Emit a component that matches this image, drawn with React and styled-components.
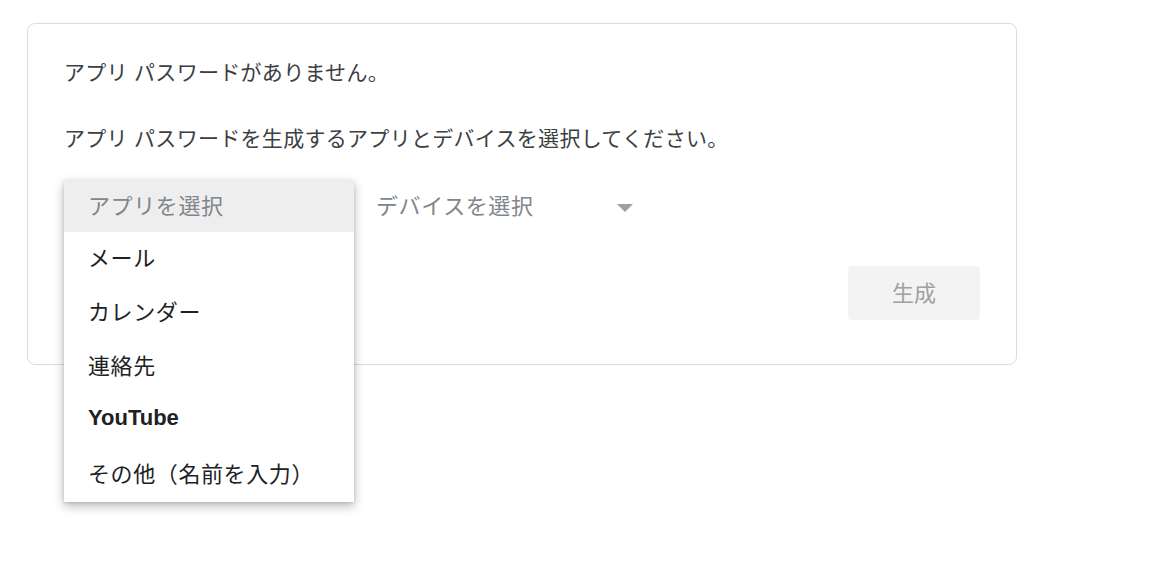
import styled, { createGlobalStyle } from 'styled-components';

const GlobalStyle = createGlobalStyle`
  html, body {
    margin: 0;
    background: #ffffff;
    font-family: "Liberation Sans", "Noto Sans CJK JP", sans-serif;
  }
`;

const Page = styled.div`
  box-sizing: border-box;
  min-height: 582px;
  padding: 23px 0 0 27px;
`;

const Card = styled.div`
  position: relative;
  box-sizing: border-box;
  width: 990px;
  height: 342px;
  padding: 35px 36px 0 36px;
  border: 1px solid #dadce0;
  border-radius: 8px;
`;

const Message = styled.p`
  margin: 0 0 ${(p) => p.$gap}px 0;
  font-size: 21px;
  line-height: 28px;
  letter-spacing: 0.3px;
  color: #3c4043;
`;

const SelectRow = styled.div`
  display: flex;
  align-items: center;
  height: 52px;
  margin-top: 27px;
`;

const Select = styled.div`
  display: flex;
  align-items: center;
  justify-content: space-between;
  box-sizing: border-box;
  width: ${(p) => p.$width}px;
  height: 52px;
  padding: 0 ${(p) => p.$padRight}px 5px ${(p) => p.$padLeft}px;
  font-size: 22px;
  letter-spacing: 0.6px;
  color: #80868b;
`;

const Caret = styled.span`
  width: 0;
  height: 0;
  border-left: 8px solid transparent;
  border-right: 8px solid transparent;
  border-top: 8px solid #9aa0a6;
  margin-top: 9px;
`;

const ButtonRow = styled.div`
  display: flex;
  justify-content: flex-end;
  margin-top: 34px;
`;

const GenerateButton = styled.button`
  width: 132px;
  height: 54px;
  padding: 0 0 5px 0;
  border: 0;
  border-radius: 4px;
  background: #f3f3f3;
  color: #a0a0a0;
  font-family: "Noto Sans CJK JP", sans-serif;
  font-size: 22px;
`;

const Menu = styled.ul`
  position: absolute;
  left: 36px;
  top: 156px;
  z-index: 2;
  width: 290px;
  margin: 0;
  padding: 0;
  list-style: none;
  background: #ffffff;
  box-shadow: 0 4px 10px rgba(0, 0, 0, 0.28), 0 1px 3px rgba(0, 0, 0, 0.12);
`;

const MenuItem = styled.li`
  display: flex;
  align-items: center;
  height: ${(p) => (p.$header ? 52 : 54)}px;
  padding-left: 24px;
  padding-bottom: ${(p) => (p.$header ? 5 : 6)}px;
  box-sizing: border-box;
  font-size: 22px;
  letter-spacing: ${(p) => (p.$bold ? 0 : 0.6)}px;
  font-weight: ${(p) => (p.$bold ? 700 : 400)};
  color: ${(p) => (p.$header ? '#80868b' : '#202124')};
  background: ${(p) => (p.$header ? '#eeeeee' : '#ffffff')};
`;

const apps = ['メール', 'カレンダー', '連絡先', 'YouTube', 'その他（名前を入力）'];

export default function App() {
  return (
    <Page>
      <GlobalStyle />
      <Card>
        <Message $gap={38}>アプリ パスワードがありません。</Message>
        <Message $gap={0}>アプリ パスワードを生成するアプリとデバイスを選択してください。</Message>
        <SelectRow>
          <Select $width={290} $padLeft={24} $padRight={0}>アプリを選択</Select>
          <Select $width={282} $padLeft={22} $padRight={3}>
            デバイスを選択
            <Caret />
          </Select>
        </SelectRow>
        <ButtonRow>
          <GenerateButton>生成</GenerateButton>
        </ButtonRow>
        <Menu>
          <MenuItem $header>アプリを選択</MenuItem>
          {apps.map((a) => (
            <MenuItem key={a} $bold={a === 'YouTube'}>
              {a}
            </MenuItem>
          ))}
        </Menu>
      </Card>
    </Page>
  );
}
